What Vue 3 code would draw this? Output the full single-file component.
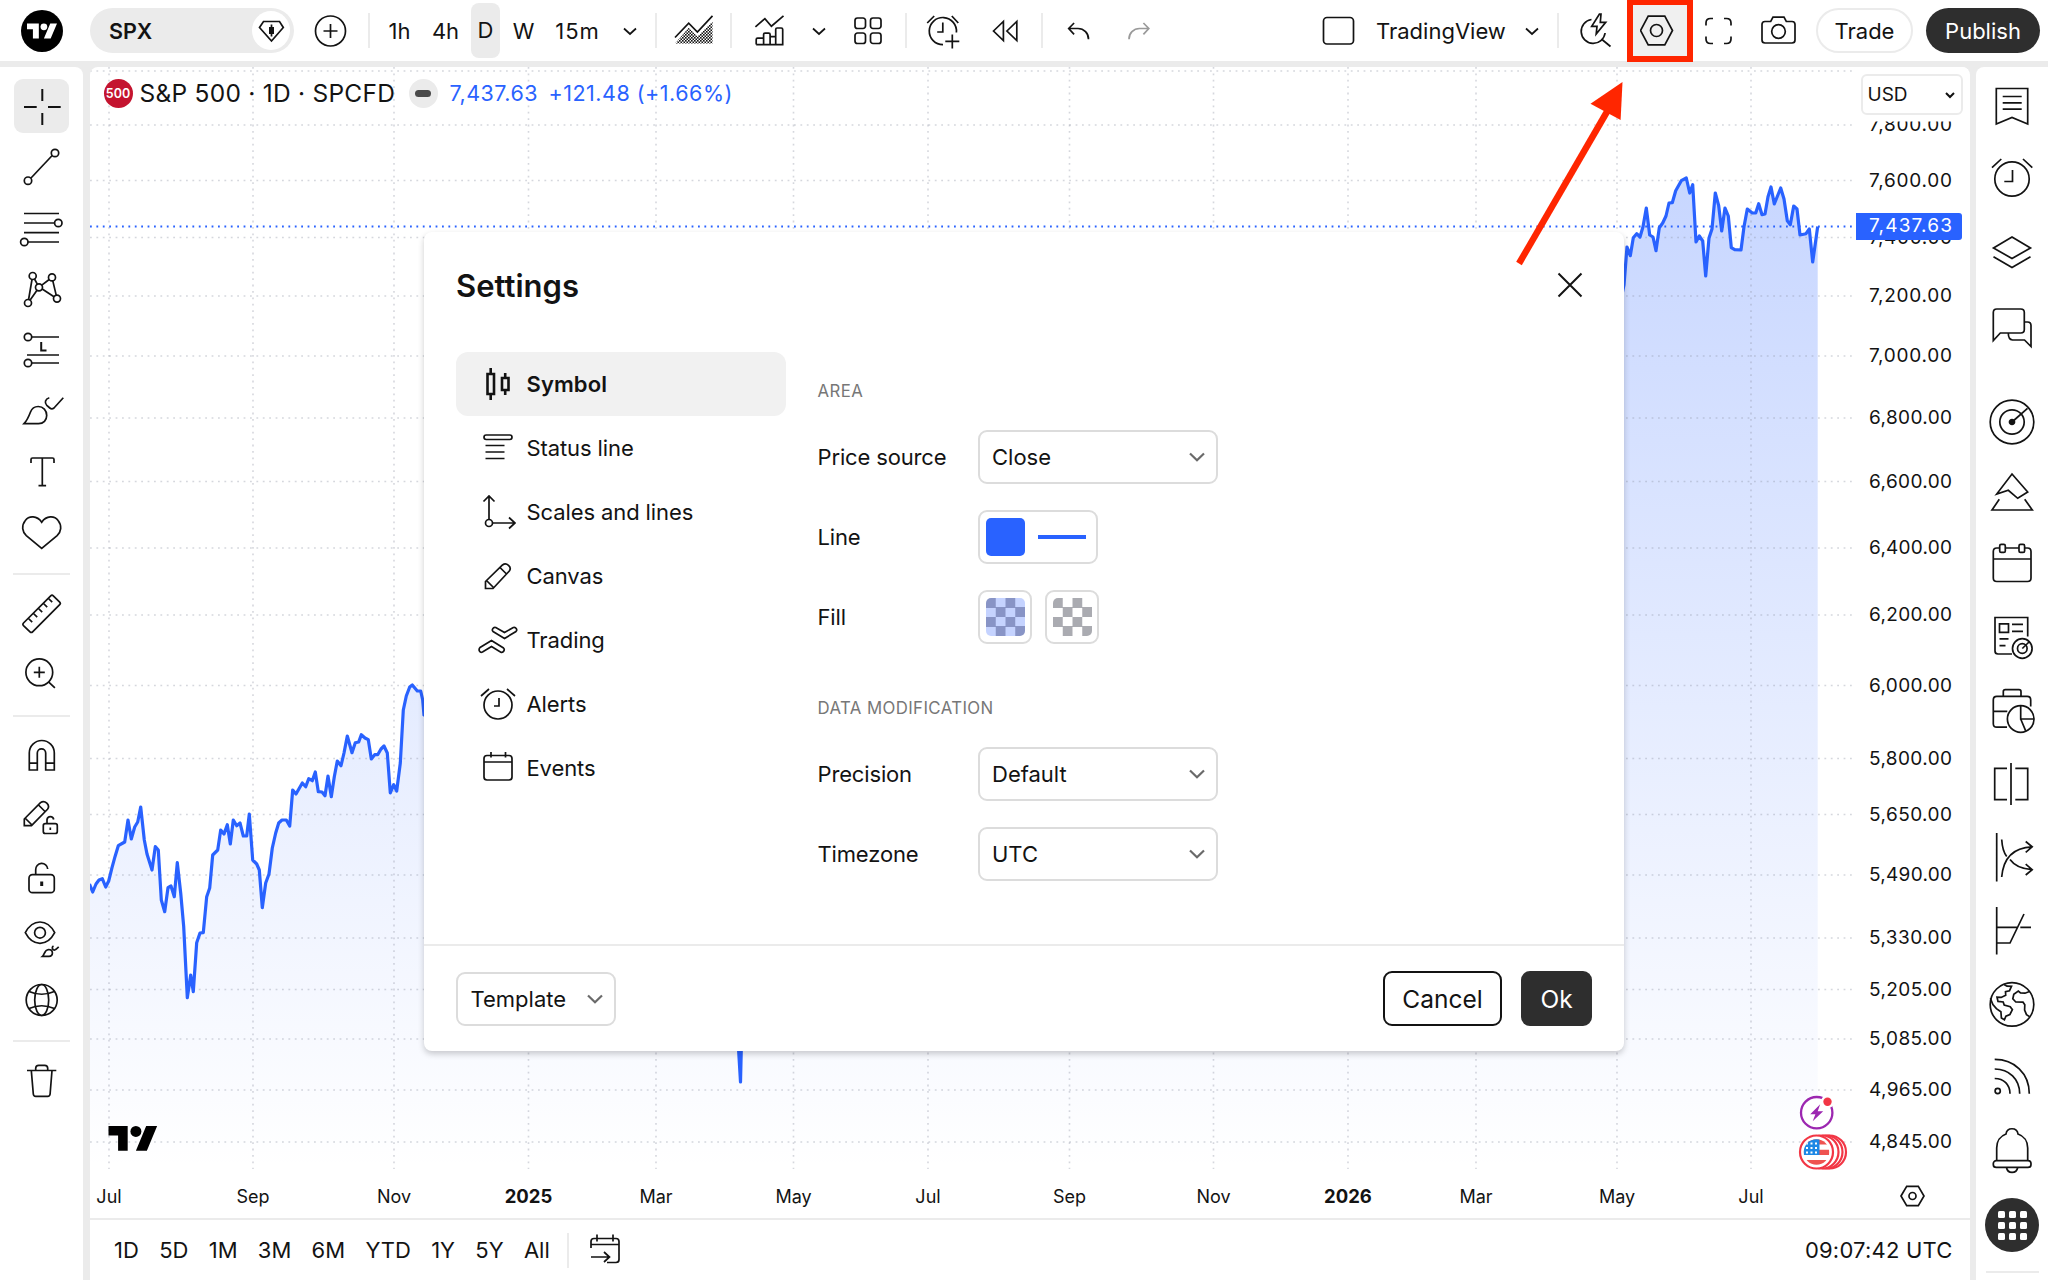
<script setup>

import { ref, computed } from 'vue';

// top bar
const intervals = ref(['1h', '4h', 'D', 'W', '15m']);
const activeInterval = ref('D');

// icons of the top bar, all drawn around 0,0
const topIcons = {
  plus: '<circle r="15"/><path d="M-7 0H7M0-7V7"/>',
  area: '<path d="M-19 6.5L-5.3-7.8 3.4 1 18.5-15.2"/><path d="M-19 12.5L-5.3-3.2 3.4 5.5 18.5-9.5V12.5z" fill="url(#hatch)" stroke="none"/>',
  indicators: '<path d="M-13.6-4.2l9.5-8.2 6.5 7.6L14.5-15.2M-12.8 13.6V8.6q0-1.4 1.4-1.4h6v6.4h-7.4M-5.4 13.6V3.6q0-1.4 1.4-1.4h3.7q1.4 0 1.4 1.4v10h-6.5M1.1 5.7h5.6v7.9H1.1M6.7 13.6V-1.6q0-1.4 1.4-1.4h4.2q1.4 0 1.4 1.4v15.2h-7"/>',
  layout: '<rect x="-13" y="-13" width="10.5" height="10.5" rx="2.5"/><rect x="2.5" y="-13" width="10.5" height="10.5" rx="2.5"/><rect x="-13" y="2" width="10.5" height="10.5" rx="2.5"/><rect x="2.5" y="2" width="10.5" height="10.5" rx="2.5"/>',
  alarm: '<path d="M0 13.7A13.6 13.6 0 1 1 13.4 1.5M-.2-8.5V1h-5.6M-15.8-8l7-7M8.8-15l6.5 7M2.3 10.3h14M9.3 3.5v14"/>',
  replay: '<path d="M-11.5 0L-1.6-9.5V9.5zM1.9 0L11.8-9.5V9.5z"/>',
  undo: '<path d="M-4.4-8l-5.4 5.5 5.4 5.8M-9.8-2.5H-.5A10.5 10.5 0 0 1 10 8.3"/>',
  redo: '<path d="M4.4-8l5.4 5.5-5.4 5.8M9.8-2.5H.5A10.5 10.5 0 0 0-10 8.3"/>',
  quick: '<path d="M-5-11.5A12 12 0 1 0 8.6 2M5.5 8.5L14 15.5M3-17l-7.8 12.3h5.3L-.3 3 9.2-8.7H3.8L4.5-17z"/>',
  settings: '<path d="M-16 0l7.7-14.3H8.3L16 0 8.3 14.3H-8.3z"/><circle r="6"/>',
  full: '<path d="M-12.5-5.5v-2.5q0-4.5 4.5-4.5h2.500M5.500-12.500h2.500q4.500 0 4.500 4.500v2.500M12.500 5.500v2.500q0 4.500-4.500 4.500h-2.500M-5.500 12.500h-2.500q-4.500 0-4.500-4.500v-2.500"/>',
  camera: '<path d="M-13.500-9.500h5.700l2.300-4.300h11l2.300 4.300h5.700q3 0 3 3V9q0 3-3 3h-27q-3 0-3-3V-6.500q0-3 3-3z"/><circle cy=".5" r="6.800"/>',
};

// drawing tools, grouped the way they are separated in the left bar
const toolGroups = [
  [
    { name: 'cross', svg: '<path stroke-width="2" d="M28.300 10v12M28.300 34v12M10 28h12.700M34 28h12.700"/>' },
    { name: 'trend', svg: '<circle cx="14" cy="40.700" r="3.700"/><circle cx="41" cy="13" r="3.700"/><path d="M17 38L38.200 15.500"/>' },
    { name: 'fib', svg: '<path d="M10 12.500h35M10 22h30.600M10 31.700h35M14 41h31"/><circle cx="44.300" cy="22" r="3.700"/><circle cx="10.300" cy="41" r="3.700"/>' },
    { name: 'pattern', svg: '<circle cx="14" cy="41" r="3.500"/><circle cx="18.700" cy="14" r="3.500"/><circle cx="25" cy="25.300" r="3.500"/><circle cx="38" cy="15.400" r="3.500"/><circle cx="43" cy="36.600" r="3.500"/><path d="M14.600 37.500L18 17.500M20.500 17l2.800 5.200M27.800 23.200l7.400-5.700M38.800 18.900l3.400 14.200M28.200 27l11.800 7.800M23 28.200L16 38.200"/>' },
    { name: 'forecast', svg: '<circle cx="14" cy="14" r="3.700"/><path d="M17.700 14H45M13 32h32M17.700 40H45"/><circle cx="14" cy="40" r="3.700"/><path stroke-width="2" d="M27.200 19v8.600h5.300"/>' },
    { name: 'brush', svg: '<path d="M10 39.700h14.500c5 0 8.200-3.500 8.200-8.300 0-5-3.500-8.900-8.500-8.900-4 0-6.500 2.300-7.700 5.500-1.500 4-3 8-6.500 11.700zM35.300 13.700c-4 1.200-5.200 5-2.500 7.600l3 2.700c1.500 1.300 2.700 1.200 4.200 0L49.300 13.700"/>' },
    { name: 'text', svg: '<path d="M17 18v-3.500q0-1.500 1.500-1.500h20q1.500 0 1.500 1.500V18M28.300 13v27.600M24.500 40.600h7.600"/>' },
    { name: 'heart', svg: '<path d="M27.700 16.200C23 9.500 15 9.500 11.300 14.500c-4.200 5.300-3 11.500 1 15.200L27.700 42.500 43.100 29.700c4-3.700 5.200-9.900 1-15.200C40.400 9.500 32.400 9.500 27.700 16.200z"/>' },
  ],
  [
    { name: 'ruler', svg: '<path d="M9.500 36L36.700 8.800q1.300-1.300 2.600 0l6.400 6.300q1.300 1.300 0 2.600L18.600 44.800q-1.300 1.300-2.600 0L9.500 38.600q-1.300-1.300 0-2.600zM14.500 31.500l3.700 3.700M19.500 26.500l3.700 3.700M24.500 21.500l3.700 3.700M29.500 16.500l3.700 3.700M34.500 11.500l3.700 3.700"/>' },
    { name: 'zoom', svg: '<circle cx="25.300" cy="24.300" r="13.400"/><path d="M34.500 33.800l6.400 6M19.800 24.300h11M25.300 18.800v11"/>' },
  ],
  [
    { name: 'magnet', svg: '<path d="M15.300 41V24a12.500 12.500 0 0 1 25 0v17h-8.600V24a4.200 4.200 0 0 0-8.400 0v17zM15.300 34.200h8M31.700 34.200h8.600"/>' },
    { name: 'pencil-lock', svg: '<path d="M10.300 35.700V29L26.500 12.700q3.200-2.600 6.300.5t.7 6.100L17.500 35.700zM11.500 28.500l6.500 6.500M24.500 15l7 7"/><rect x="29.300" y="33.700" width="14" height="9.800" rx="2"/><path d="M33 33.500v-4a3.400 3.400 0 0 1 6.700 0M36.300 37.500v2.500"/>' },
    { name: 'lock', svg: '<rect x="15" y="23.700" width="25.300" height="18" rx="3.500"/><path d="M21.700 23.500v-4.700a6 6 0 0 1 12-.8"/><path stroke-width="3" d="M27.700 30.500v4.500"/>' },
    { name: 'eye', svg: '<path d="M11.300 20.700C15 13.700 20.500 10 26 10S37 13.700 40.700 20.700C37 27.700 31.500 31.400 26 31.400S15 27.700 11.300 20.700z"/><circle cx="26" cy="20.700" r="5.400"/><path d="M28.500 44.300c1.800-1.500 2-6.500 6-6.800 2.500 0 3.900 1.500 3.900 3.500s-1.500 3.300-3.400 3.300zM39.500 34c-1.500.8-1.600 2.600-.3 3.600s2 .5 5.500-2.800"/>' },
    { name: 'globe', svg: '<circle cx="27.700" cy="27" r="15.500"/><ellipse cx="27.700" cy="27" rx="7" ry="15.500"/><path d="M15 18.500q12.700 5.500 25.400 0M15 35.500q12.700-5.500 25.400 0"/>' },
  ],
  [
    { name: 'trash', svg: '<path d="M13 16.500h29.300M17.300 16.500l2 23.500q.2 2.300 2.400 2.300h12q2.200 0 2.400-2.300L38 16.500M21.700 16.500v-2.200q0-3 3-3h6q3 0 3 3v2.200"/>' },
  ],
];

// widgets of the right bar, drawn around 0,0
const widgetGroups = [
  [
    { name: 'watchlist', svg: '<path d="M-15.700-17.500h31.400V18L0 11.500-15.700 18zM-9.300-9.500h19M-9.300-3.200h19M-9.300 3.200h19"/>' },
    { name: 'alerts', svg: '<circle cy="-1" r="17.200"/><path d="M.5-10V1.500h-8.200M-20-12.400l9.300-8.600M11-21l9.300 8.600"/>' },
    { name: 'layers', svg: '<path d="M0-17L18.500-6 0 4.500-18.500-6zM-18.500 2.700L0 13.600 18.500 2.700"/>' },
    { name: 'chat', svg: '<path d="M-18.700 12.500V-15.500q0-3.500 3.500-3.500h24q3.500 0 3.500 3.500V1.500q0 3.500-3.500 3.500h-20.500zM12.300-6h3.200q3.500 0 3.500 3.500v21L12.500 12H.5Q-3.700 11.500-3.700 5"/>' },
  ],
  [
    { name: 'screener', svg: '<circle r="21.800"/><circle r="12.200"/><path d="M0 0l15.500-13.700"/><circle r="2.500" fill="currentColor"/>' },
    { name: 'pine', svg: '<path d="M0-21L15.700-3 5.700 3.300-3.700-4.700-15.300-1zM-12.700 4.300L-20 15h40.300L12.700 4.300"/>' },
    { name: 'calendar', svg: '<path d="M-12.300-20h-2.900q-3.500 0-3.500 3.500V10q0 3.500 3.500 3.500h30.700q3.500 0 3.500-3.500v-26.500q0-3.500-3.500-3.500h-2.800M-6.700-20H7M-18.700-9H19"/><rect x="-12.300" y="-23.600" width="5.600" height="8" rx="1.500"/><rect x="7" y="-23.600" width="5.600" height="8" rx="1.500"/>' },
    { name: 'news', svg: '<path d="M15.700-4.500v-19H-17V10q0 3 3 3H0M-12.500-17.200h9v8.600h-9zM0-16.700h11M0-9.700h11M-12.500-2.200h9M-12.500 4.600h6"/><circle cx="10.300" cy="7.500" r="9.800"/><circle cx="10.300" cy="7.500" r="4.800"/><path d="M10.300 7.500L17 1"/>' },
    { name: 'portfolio', svg: '<path d="M-8.700-17.600v-4.700q0-2 2-2H7q2 0 2 2v4.700M18.700-7.500v-6.600q0-3.500-3.500-3.500h-30.400q-3.500 0-3.500 3.500V9.700q0 3.500 3.500 3.500H-5M-18.700-2.600h14"/><circle cx="8.700" cy="5" r="13.300"/><path d="M8.700-8.300V5H22M8.700 5l5 11.800"/>' },
    { name: 'compare', svg: '<path d="M-1-24v42M-5-18.700h-12.300v31.300H-5M3.300-18.700h12.400v31.300H3.300"/>' },
    { name: 'options', svg: '<path d="M-15.300-27v48.500M-10.300-20.500c.5 8 2.300 13.500 5 17M-2-.5c5 7 11.500 9.500 22 10.200M-10.300 17C-8.500-4 3-12.500 20-13.200M13.700-18.500l6.500 5.300-6.500 5.500M13.700 4.200l6.500 5.500-6.500 5.300"/>' },
    { name: 'payoff', svg: '<path d="M-15.300-26v47.600M-15.300-5.700H5M8.300-5.700H19M-15.300 10H-2L12-19"/>' },
    { name: 'world', svg: '<circle cy="-1.600" r="21.800"/><path d="M-8-21.500l3 1.700 4.500.2-2 4.300-4 1 .2 3.500-4.500 2.200-4.200-.3 1 4.300 5.200.6 1 3 6 1.700 2.200 3-2.500 4.800-4 1.700-1.500 3.600-3-1.700-.5-6.300-4.500-3.200-3.500-4-2.500-6.300M17.500-14.500l-4.500 1.700-4.500-.2-2.200-2-4.500 3.200-1 4.500 3 3.300 7.200.2 1.800 2.600-.2 5.200 1.900 4.600 3 2"/>' },
    { name: 'feed', svg: '<circle cx="-14.300" cy="12" r="2.600"/><path d="M-17.300-.5C-8.300-.5-2 5.500-2 14.800M-17.300-10C-3-10 7.700 0 7.700 14.800M-17.300-19.600C2-19.600 17.300-6 17.300 14.800"/>' },
    { name: 'bell', svg: '<rect x="-18.700" y="8.600" width="37.700" height="6.800" rx="3"/><path d="M-15.300 8.600V-4c0-6.500 3.500-12 9.300-14 1-7 11-7 12 0 6 2 9.700 7.500 9.700 14V8.600M-5.500 15.500c1 6.500 10 6.500 11.200 0"/>' },
  ],
];

// grid and labels of the chart
const priceTicks = [
  { y: 125, text: '7,800.00' },
  { y: 180.5, text: '7,600.00' },
  { y: 237.5, text: '7,400.00' },
  { y: 296, text: '7,200.00' },
  { y: 356, text: '7,000.00' },
  { y: 418, text: '6,800.00' },
  { y: 481.5, text: '6,600.00' },
  { y: 548, text: '6,400.00' },
  { y: 615, text: '6,200.00' },
  { y: 685.5, text: '6,000.00' },
  { y: 758.5, text: '5,800.00' },
  { y: 814.5, text: '5,650.00' },
  { y: 875, text: '5,490.00' },
  { y: 938, text: '5,330.00' },
  { y: 989.5, text: '5,205.00' },
  { y: 1039, text: '5,085.00' },
  { y: 1090, text: '4,965.00' },
  { y: 1142, text: '4,845.00' },
];

const timeTicks = [
  { x: 109, text: 'Jul' },
  { x: 253, text: 'Sep' },
  { x: 394, text: 'Nov' },
  { x: 528.5, text: '2025', bold: true },
  { x: 656, text: 'Mar' },
  { x: 793.5, text: 'May' },
  { x: 928, text: 'Jul' },
  { x: 1069.5, text: 'Sep' },
  { x: 1213.5, text: 'Nov' },
  { x: 1348, text: '2026', bold: true },
  { x: 1476, text: 'Mar' },
  { x: 1617, text: 'May' },
  { x: 1751, text: 'Jul' },
];

// price series, x and y pairs
const linePoints = ref([
  '89.5,884 92.7,892 96,884 99,880 102.3,878.7 105.7,887 108.7,881 112,867.7 115,856.7 118.3,845.7',
  '124.7,842 128,820 131.3,839 134.7,827 137.7,822 140.7,807 144.3,840 147,854 152,870 155.3,846.7',
  '158.3,850 161.3,900 164.7,911.7 168,887.7 171,886 174.3,896.7 177.3,862.7 180.7,893 183.7,926.7',
  '187.3,997.7 190.7,975 193.3,991.7 196.7,942.7 200,933 203.3,932.7 206.7,896.7 209.7,888 212.7,855',
  '217.7,850 220.7,830 224,834 227.3,824.7 230.3,844 233.3,820 236.7,825.7 240,823 243.3,836 246.7,836',
  '249.3,814 252.7,860 256.7,864 259.3,870 262.3,907.7 265.7,883 269,874 272.3,848 275.7,833 278.7,823',
  '282,820 286.3,820 289.7,826 292.7,790 296,794 302.3,783 305.7,786.7 308.7,778.7 312.3,780.7 315.3,772',
  '318.3,791.7 322,792 325,795.7 328,776 331.3,796.7 334.3,776.7 337.3,761 341,765.7 344,753 347.3,736',
  '352,752.7 355.3,742.7 358.7,742 361.3,734.7 365,738 368.3,739.7 371.3,759 374.7,754.7 377.7,754.7',
  '381,749 384,746 387.3,753 390.3,793 393.7,784.7 396.7,791 400.3,763 403.3,710 406.3,696 409.7,687',
  '412.3,685 417.3,691 420.7,691 422.7,700 424,715 730,900 738,1040 740.5,1082 741.5,1040 760,850',
  '1600,400 1624,285 1627,247 1630.3,255.7 1633.3,237.7 1636.7,233.7 1640,237 1643,226.7 1646.3,208',
  '1649.7,235 1653,237 1656,250.7 1659.3,227.7 1662.7,223 1666,216 1669,203 1672.3,202.7 1675.7,190.7',
  '1681.3,180.7 1686.3,178 1689.7,193 1692.7,184.7 1696,242 1699.3,236 1702.7,241 1705.7,276 1709,238',
  '1712,229 1715.3,193 1718.7,205.7 1721.7,231 1725,208 1728.3,216 1731.3,247.7 1734.7,249.7 1741,250',
  '1744,226.7 1747.3,209 1752.3,213 1755.7,213 1758.7,203.7 1762,214.7 1765,214 1768,196.7 1771,187',
  '1774.3,204 1780.7,188 1784,199 1787.3,220.7 1790.3,224.7 1793.7,206 1797,209 1800,235 1806,233.7',
  '1809.3,229 1812.7,262 1817.7,226.5',
].join(' '));

// same line closed at the bottom for the fill
const areaPoints = computed(() => linePoints.value + ' 1817.7,1169 89.5,1169');

const ranges = ['1D', '5D', '1M', '3M', '6M', 'YTD', '1Y', '5Y', 'All'];

// settings dialog
const showSettings = ref(true);
const activeTab = ref('Symbol');

const tabs = [
  { name: 'Symbol', svg: '<path stroke-width="2.6" d="M-10.500-10h6.500v20h-6.500zM-7.300-16v6M-7.300 10v6M4-6h6.500V6H4zM7.200-11v5M7.200 6v5"/>' },
  { name: 'Status line', svg: '<rect x="-14" y="-13" width="28" height="4.500" rx="2.200"/><path d="M-12.500-2.500h19M-12.500 4h19M-12.500 10.500h19"/>' },
  { name: 'Scales and lines', svg: '<path d="M-9 7.500V-15.500M-14.500-10.500l5.500-5.500 5.500 5.500M-5.500 11H16.500M11 5.500l6 5.500-6 5.500"/><circle cx="-9" cy="11" r="3.500"/>' },
  { name: 'Canvas', svg: '<path d="M-12.500 12.500V5.500L4.500-11q3-2.300 6 .3t.8 5.700L-5 12.500zM-11.500 4.500l7 7M2-8.500l7 7"/>' },
  { name: 'Trading', svg: '<path d="M-18 7.500L-6.500.5 5.500 8q1.300 1.200.3 3t-3 1.200L-6.500 6.500-15.500 12q-2 .8-3-.9T-18 7.500zM-5-8.500L6.500-1.500 18-8.500q1.300-1.200.3-2.900t-3-1.100L6.500-7.500-2.200-12.500q-2-.6-3 1.100T-5-8.500z"/>' },
  { name: 'Alerts', svg: '<circle cy="1" r="14"/><path d="M1-6v8h-5M-17-8l8-7M9-15l8 7"/>' },
  { name: 'Events', svg: '<rect x="-14" y="-12.500" width="28" height="24.500" rx="3"/><path d="M-14-6H14M-7-16v5.500M7.500-16v5.500"/>' },
];

const closeSettings = () => {
  showSettings.value = false;
};

</script>

<template>

  <div class="app">

    <!-- pattern for the area chart type icon -->
    <svg class="defs" width="0" height="0">
      <defs>
        <pattern id="hatch" width="3" height="3" patternUnits="userSpaceOnUse">
          <rect width="1.6" height="1.6" fill="#111" />
          <rect x="1.5" y="1.5" width="1.5" height="1.5" fill="#111" />
        </pattern>
      </defs>
    </svg>

    <header class="topbar">
      <div class="logo">
        <svg width="30" height="16" viewBox="0 4 35.5 18" fill="#fff">
          <path d="M14 22H7V11H0V4h14v18zM28 22h-8l7.5-18h8L28 22z" />
          <circle cx="20" cy="8" r="4" />
        </svg>
      </div>

      <div class="search">
        <span class="ticker">SPX</span>
        <span class="badge">
          <svg class="icon" width="32" height="32" viewBox="-16 -16 32 32">
            <path d="M-7.500-9.500h16L12.300-3.500.5 10-11.500-3.500z" />
            <rect x="-2" y="-4" width="5" height="7" fill="currentColor" stroke="none" />
            <path d="M.5-6.500V5.500" />
          </svg>
        </span>
      </div>

      <button class="tool w74"><svg class="icon" viewBox="-19.500 -20 40 40" v-html="topIcons.plus"></svg></button>
      <i class="sep"></i>

      <div class="intervals">
        <span v-for="item in intervals" :key="item" :class="['interval', 'i' + item, { active: item === activeInterval }]"
          @click="activeInterval = item">{{ item }}</span>
        <svg class="icon chev" viewBox="-8 -5 16 10">
          <path d="M-6-2.500L0 3l6-5.500" />
        </svg>
      </div>
      <i class="sep"></i>

      <button class="tool w73"><svg class="icon" viewBox="-20 -20 40 40" v-html="topIcons.area"></svg></button>
      <i class="sep"></i>
      <button class="tool w74"><svg class="icon" viewBox="-20 -20 40 40" v-html="topIcons.indicators"></svg></button>
      <button class="tool w25"><svg class="icon chev" viewBox="-8 -5 16 10">
          <path d="M-6-2.500L0 3l6-5.500" />
        </svg></button>
      <button class="tool w74"><svg class="icon" viewBox="-20 -20 40 40" v-html="topIcons.layout"></svg></button>
      <i class="sep"></i>
      <button class="tool w72"><svg class="icon" viewBox="-20 -20 40 40" v-html="topIcons.alarm"></svg></button>
      <button class="tool w62"><svg class="icon" viewBox="-15 -20 40 40" v-html="topIcons.replay"></svg></button>
      <i class="sep"></i>
      <button class="tool w72"><svg class="icon" viewBox="-19.500 -20 40 40" v-html="topIcons.undo"></svg></button>
      <button class="tool w50 dim"><svg class="icon" viewBox="-19 -20 40 40" v-html="topIcons.redo"></svg></button>

      <div class="right">
        <svg class="icon" viewBox="-20.500 -20 40 40">
          <rect x="-15" y="-13.500" width="30" height="26.500" rx="3.500" />
        </svg>
        <span class="layout-name">TradingView</span>
        <svg class="icon chev" viewBox="-8 -5 16 10">
          <path d="M-6-2.500L0 3l6-5.500" />
        </svg>
        <i class="sep"></i>
        <svg class="icon quick" viewBox="-20.500 -20 40 40" v-html="topIcons.quick"></svg>
        <button class="marked" @click="showSettings = true">
          <svg class="icon" viewBox="-16.500 -19.500 40 40" v-html="topIcons.settings"></svg>
        </button>
        <svg class="icon full" viewBox="-20.500 -20 40 40" v-html="topIcons.full"></svg>
        <svg class="icon camera" viewBox="-20.500 -20 40 40" v-html="topIcons.camera"></svg>
        <button class="trade">Trade</button>
        <button class="publish">Publish</button>
      </div>
    </header>

    <div class="main">

      <!-- drawing tools -->
      <aside class="leftbar">
        <div v-for="(group, index) in toolGroups" :key="index" class="group">
          <div v-for="tool in group" :key="tool.name" class="slot">
            <div :class="['tile', { active: tool.name === 'cross' }]">
              <svg class="icon" viewBox="0 0 56 54" v-html="tool.svg"></svg>
            </div>
          </div>
        </div>
      </aside>

      <section class="center">

        <svg class="chart" width="1880" height="1151" viewBox="90 67 1880 1151">
          <defs>
            <linearGradient id="fill" gradientUnits="userSpaceOnUse" x1="0" y1="178" x2="0" y2="1169">
              <stop offset="0" stop-color="#2962ff" stop-opacity=".26" />
              <stop offset="1" stop-color="#2962ff" stop-opacity="0" />
            </linearGradient>
          </defs>

          <polygon :points="areaPoints" fill="url(#fill)" />

          <g class="grid">
            <path v-for="t in timeTicks" :key="t.x" :d="`M${t.x} 67V1169`" />
            <path d="M90 71H1852" />
            <path v-for="p in priceTicks" :key="p.y" :d="`M90 ${p.y}H1852`" />
          </g>

          <path class="last" d="M90 226.500H1852" />
          <polyline class="line" :points="linePoints" />

          <!-- price scale -->
          <g class="prices">
            <text v-for="p in priceTicks" :key="p.y" x="1869" :y="p.y + 6" textLength="83">{{ p.text }}</text>
          </g>
          <rect x="1854" y="67" width="114" height="54.5" fill="#fff" />
          <path d="M1856 213h103q3 0 3 3v21q0 3-3 3h-103z" fill="#2962ff" />
          <text class="tag" x="1869" y="232" textLength="83">7,437.63</text>

          <!-- time scale -->
          <g class="times">
            <text v-for="t in timeTicks" :key="t.x" :x="t.x" y="1203" :class="{ bold: t.bold }">{{ t.text }}</text>
          </g>
          <g class="icon" transform="translate(1912.5 1196)">
            <path d="M-11.500 0l5.700-9.700H5.800L11.500 0 5.800 9.700H-5.800z" />
            <circle r="3.500" />
          </g>

          <!-- watermark -->
          <g transform="translate(108.500 1120.500) scale(1.370)">
            <path d="M14 22H7V11H0V4h14v18zM28 22h-8l7.500-18h8L28 22z" />
            <circle cx="20" cy="8" r="4" />
          </g>

          <!-- events on the last bar -->
          <g transform="translate(1816.700 1112.700)">
            <circle r="15.7" fill="#fff" stroke="#9c27b0" stroke-width="2.3" />
            <path d="M3.500-8.500L-6.500 1.500h5.200L-4 8.500 6.500-1.500H1z" fill="#9c27b0" />
            <circle cx="10.8" cy="-11" r="6.5" fill="#fff" />
            <circle cx="10.8" cy="-11" r="4.2" fill="#f23645" />
          </g>
          <g transform="translate(1816.500 1152)" fill="#fff" stroke="#f23645" stroke-width="2.2">
            <circle cx="13" r="16.5" />
            <circle cx="9.5" r="16.5" />
            <circle cx="5.5" r="16.5" />
            <circle r="16.5" />
            <g stroke="none">
              <clipPath id="round">
                <circle r="12.8" />
              </clipPath>
              <g clip-path="url(#round)">
                <rect x="-13" y="-13" width="26" height="26" fill="#fff" />
                <path d="M-13-13h26v5.500h-26zM-13-2.300h26v5.200h-26zM-13 8h26v6h-26z" fill="#ef5350" />
                <rect x="-13" y="-13" width="16" height="16" fill="#1e88e5" />
                <path d="M-10.500-8.500H2M-10.500-4H2M-10.500.5H2" stroke="#fff" stroke-width="1.8" stroke-dasharray="2 2.5" />
              </g>
            </g>
          </g>
        </svg>

        <!-- symbol legend over the chart -->
        <div class="legend">
          <span class="sp">500</span>
          <span class="title">S&amp;P 500 · 1D · SPCFD</span>
          <span class="dash"><i></i></span>
          <span class="value">7,437.63</span>
          <span class="value change">+121.48 (+1.66%)</span>
        </div>

        <div class="currency">
          <span>USD</span>
          <svg width="12" height="10" viewBox="-6 -5 12 10" fill="none" stroke="#111" stroke-width="2">
            <path d="M-4-2L0 2l4-4" />
          </svg>
        </div>

        <footer class="bottombar">
          <span v-for="range in ranges" :key="range">{{ range }}</span>
          <i class="sep"></i>
          <svg class="icon goto" viewBox="-16 -16 32 32">
            <path d="M-14-2V-8.500q0-3 3-3h22q3 0 3 3V9.500q0 3-3 3H2M-14-5.500H14M-8-15.500v7M8-15.500v7M-14 7H4M-1 2l5.500 5-5.500 5" />
          </svg>
          <span class="clock">09:07:42 UTC</span>
        </footer>
      </section>

      <!-- widgets -->
      <aside class="rightbar">
        <div v-for="(group, index) in widgetGroups" :key="index" class="widgets">
          <div v-for="item in group" :key="item.name" class="widget">
            <svg class="icon" width="56" height="60" viewBox="-28 -30 56 60" v-html="item.svg"></svg>
          </div>
        </div>
        <div class="widget">
          <div class="apps"><i v-for="n in 9" :key="n"></i></div>
        </div>
        <hr>
      </aside>
    </div>

    <!-- settings dialog -->
    <div v-if="showSettings" class="dialog">
      <div class="dialog-head">
        <h2>Settings</h2>
        <svg class="icon close" width="26" height="26" viewBox="-13 -13 26 26" @click="closeSettings()">
          <path d="M-11.500-11.500l23 23M11.500-11.500l-23 23" />
        </svg>
      </div>

      <div class="dialog-body">
        <nav>
          <div v-for="tab in tabs" :key="tab.name" :class="['tab', { active: tab.name === activeTab }]"
            @click="activeTab = tab.name">
            <svg class="icon" width="40" height="40" viewBox="-20 -20 40 40" v-html="tab.svg"></svg>
            <span>{{ tab.name }}</span>
          </div>
        </nav>

        <div class="form">
          <h3>AREA</h3>
          <div class="row">
            <label>Price source</label>
            <div class="select">Close<svg class="arrow" viewBox="-9 -6 18 12">
                <path d="M-7-3.500L0 3.200l7-6.700" />
              </svg></div>
          </div>
          <div class="row">
            <label>Line</label>
            <div class="line-box"><i class="swatch"></i><i class="stroke"></i></div>
          </div>
          <div class="row">
            <label>Fill</label>
            <div class="color-box"><i class="swatch checker blue"></i></div>
            <div class="color-box"><i class="swatch checker"></i></div>
          </div>

          <h3 class="second">DATA MODIFICATION</h3>
          <div class="row">
            <label>Precision</label>
            <div class="select">Default<svg class="arrow" viewBox="-9 -6 18 12">
                <path d="M-7-3.500L0 3.200l7-6.700" />
              </svg></div>
          </div>
          <div class="row">
            <label>Timezone</label>
            <div class="select">UTC<svg class="arrow" viewBox="-9 -6 18 12">
                <path d="M-7-3.500L0 3.200l7-6.700" />
              </svg></div>
          </div>
        </div>
      </div>

      <div class="dialog-foot">
        <div class="template">Template<svg class="arrow" viewBox="-9 -6 18 12">
            <path d="M-7-3.500L0 3.200l7-6.700" />
          </svg></div>
        <button class="cancel" @click="closeSettings()">Cancel</button>
        <button class="ok" @click="closeSettings()">Ok</button>
      </div>
    </div>

    <!-- arrow pointing at the settings button -->
    <svg class="pointer" width="120" height="200" viewBox="1510 75 120 200">
      <path d="M1519 263.500L1608 110" stroke="#ff2600" stroke-width="6.5" />
      <path d="M1622.500 82l-32 21.700L1620.600 120z" fill="#ff2600" />
    </svg>

  </div>

</template>

<style>
body {
  overflow: hidden;
}
</style>

<style scoped>
.app {
  position: relative;
  width: 2048px;
  height: 1280px;
  overflow: hidden;
  background: #ebebeb;
  color: #131313;
  font-family: Inter, "Liberation Sans", sans-serif;
  font-size: 22px;
}

.app * {
  box-sizing: border-box;
}

.defs,
.pointer {
  position: absolute;
}

.pointer {
  left: 1510px;
  top: 75px;
}

button {
  padding: 0;
  border: none;
  background: none;
  color: inherit;
  font: inherit;
  cursor: pointer;
}

.icon {
  flex: none;
  fill: none;
  stroke: currentColor;
  stroke-width: 1.7;
}

/* top bar */
.topbar {
  display: flex;
  align-items: center;
  height: 61px;
  background: #fff;
}

.topbar .icon {
  width: 40px;
  height: 40px;
}

.topbar .icon.chev {
  width: 16px;
  height: 10px;
}

.logo {
  display: flex;
  flex: none;
  align-items: center;
  justify-content: center;
  width: 42px;
  height: 42px;
  margin: 0 27px 0 21px;
  border-radius: 50%;
  background: #000;
}

.search {
  display: flex;
  flex: none;
  align-items: center;
  justify-content: space-between;
  width: 204px;
  height: 45px;
  padding: 0 4px 0 19px;
  border-radius: 23px;
  background: #ebebeb;
}

.ticker {
  font-weight: 600;
  font-size: 21.5px;
}

.badge {
  display: flex;
  align-items: center;
  justify-content: center;
  width: 38px;
  height: 39px;
  border-radius: 50%;
  background: #fff;
}

.badge .icon {
  width: 32px;
  height: 32px;
}

.sep {
  flex: none;
  width: 2px;
  height: 35px;
  background: #ebebeb;
}

.tool {
  display: flex;
  flex: none;
  align-items: center;
  justify-content: center;
  height: 61px;
}

.w25 {
  width: 25px;
}

.w50 {
  width: 50px;
}

.w62 {
  width: 62px;
}

.w72 {
  width: 72px;
}

.w73 {
  width: 73px;
}

.w74 {
  width: 74px;
}

.dim {
  color: #9a9a9a;
}

.intervals {
  display: flex;
  flex: none;
  align-items: center;
  width: 285px;
  padding-left: 6.5px;
}

.interval {
  flex: none;
  width: 46px;
  text-align: center;
}

.interval.iD {
  width: 29px;
  margin-left: 2.5px;
}

.interval.iW {
  width: 47px;
}

.interval.i15m {
  width: 61px;
  letter-spacing: .9px;
}

.interval.active {
  height: 55px;
  border-radius: 8px;
  background: #ebebeb;
  line-height: 55px;
}

.intervals .chev {
  margin-left: 14px;
}

.right {
  display: flex;
  align-items: center;
  height: 61px;
  margin-left: auto;
  padding-right: 8px;
}

.layout-name {
  width: 129px;
  margin: 0 19px 0 18px;
  white-space: nowrap;
}

.right .sep {
  margin: 0 17px 0 17px;
}

.marked {
  display: flex;
  align-items: center;
  justify-content: center;
  align-self: flex-start;
  width: 66px;
  height: 62px;
  margin: 0 5px 0 11px;
  border: 6.5px solid #ff2600;
  border-top-width: 5px;
  background: #f0f0f0;
}

.camera {
  margin-left: 20px;
}

.trade,
.publish {
  height: 45px;
  border-radius: 23px;
}

.trade {
  width: 97px;
  margin: 0 13px 0 18px;
  border: 2px solid #ebebeb;
}

.publish {
  width: 114px;
  background: #2e2e2e;
  color: #fff;
}

/* columns */
.main {
  display: flex;
  justify-content: space-between;
  height: 1213px;
  margin-top: 6px;
}

.leftbar {
  width: 83px;
  padding-top: 8.5px;
  border-top-right-radius: 8px;
  background: #fff;
}

.group + .group::before {
  content: '';
  display: block;
  width: 57px;
  height: 2px;
  margin: 9px 0 9px 13px;
  background: #ebebeb;
}

.slot {
  display: flex;
  align-items: center;
  height: 61px;
  padding-left: 14px;
}

.tile {
  width: 55px;
  height: 54px;
  border-radius: 9px;
}

.tile.active {
  background: #ebebeb;
}

.tile .icon {
  display: block;
  width: 56px;
  height: 54px;
}

.center {
  position: relative;
  display: flex;
  flex-direction: column;
  width: 1880px;
  overflow: hidden;
  border-radius: 8px 8px 0 0;
  background: #fff;
}

.chart {
  display: block;
  flex: none;
}

.grid path {
  fill: none;
  stroke: #8a8fa0;
  stroke-opacity: .36;
  stroke-width: 1.6;
  stroke-dasharray: 1.8 4.6;
}

.last {
  fill: none;
  stroke: #2962ff;
  stroke-width: 1.8;
  stroke-dasharray: 1.8 4.6;
}

.line {
  fill: none;
  stroke: #2962ff;
  stroke-width: 3.2;
  stroke-linejoin: round;
}

.prices text,
.tag {
  font-size: 19px;
}

.prices,
.times {
  fill: #131313;
}

.tag {
  fill: #fff;
}

.times text {
  font-size: 18px;
  text-anchor: middle;
}

.times .bold {
  font-weight: 700;
  font-size: 18.5px;
}

.legend {
  position: absolute;
  top: 10px;
  left: 14px;
  display: flex;
  align-items: center;
  height: 32px;
  white-space: nowrap;
}

.sp {
  width: 29px;
  height: 29px;
  border-radius: 50%;
  background: #c4142f;
  color: #fff;
  font-weight: 600;
  font-size: 12.5px;
  line-height: 29px;
  text-align: center;
}

.title {
  width: 256px;
  margin: 0 13px 0 7px;
  font-size: 24.5px;
  letter-spacing: .25px;
}

.dash {
  display: flex;
  align-items: center;
  justify-content: center;
  width: 29px;
  height: 29px;
  margin-right: 12px;
  border-radius: 50%;
  background: #ebebeb;
}

.dash i {
  width: 16px;
  height: 7px;
  border-radius: 3.5px;
  background: #4a4a4a;
}

.value {
  width: 89px;
  margin-right: 10px;
  color: #2962ff;
  font-size: 21.5px;
  letter-spacing: .5px;
}

.change {
  width: auto;
}

.currency {
  position: absolute;
  top: 7px;
  left: 1771px;
  display: flex;
  align-items: center;
  justify-content: space-between;
  width: 102px;
  height: 41px;
  padding: 0 5px 0 5px;
  border: 2px solid #ebebeb;
  border-radius: 6px;
  background: #fff;
  font-size: 19px;
}

.bottombar {
  display: flex;
  flex: none;
  align-items: center;
  gap: 20.3px;
  height: 62px;
  padding: 0 17px 0 24.5px;
  border-top: 2px solid #ebebeb;
  font-size: 22px;
}

.bottombar .sep {
  margin-left: -3px;
}

.goto {
  width: 32px;
  height: 32px;
}

.clock {
  margin-left: auto;
  letter-spacing: .2px;
}

/* right bar */
.rightbar {
  width: 72px;
  padding-top: 2px;
  border-top-left-radius: 8px;
  background: #fff;
}

.widget {
  display: flex;
  align-items: center;
  justify-content: center;
  height: 73px;
}

.widgets:first-child {
  margin-bottom: 20.5px;
}

.widgets:first-child .widget {
  height: 74px;
}

.apps {
  display: grid;
  grid-template-columns: repeat(3, 7px);
  gap: 4px;
  align-content: center;
  justify-content: center;
  width: 54px;
  height: 54px;
  border-radius: 50%;
  background: #2e2e2e;
}

.apps i {
  height: 7px;
  border-radius: 1.5px;
  background: #fff;
}

.rightbar hr {
  width: 53px;
  height: 2px;
  margin: 9px auto 0;
  border: none;
  background: #ebebeb;
}

/* settings dialog */
.dialog {
  position: absolute;
  top: 232px;
  left: 424px;
  display: flex;
  flex-direction: column;
  width: 1200px;
  height: 819px;
  border-radius: 8px;
  background: #fff;
  box-shadow: 0 3px 6px rgba(0, 0, 0, .2);
}

.dialog-head {
  display: flex;
  align-items: center;
  justify-content: space-between;
  height: 106px;
  padding: 0 41.5px 0 32px;
}

h2 {
  margin: 0;
  font-weight: 600;
  font-size: 31px;
}

.close {
  stroke-width: 2;
}

.dialog-body {
  display: flex;
  flex: 1;
  padding: 14px 32px 0;
}

nav {
  width: 329.5px;
  margin-right: 32px;
}

.tab {
  display: flex;
  align-items: center;
  height: 64px;
  padding-left: 22px;
  border-radius: 12px;
  cursor: pointer;
}

.tab span {
  margin-left: 8.5px;
  letter-spacing: -.1px;
}

.tab.active {
  background: #f1f1f1;
  font-weight: 600;
}

.tab.active span {
  letter-spacing: .1px;
}

h3 {
  margin: 28.5px 0 29px;
  color: #777;
  font-weight: 400;
  font-size: 16.8px;
  line-height: 20px;
  letter-spacing: .4px;
}

h3.second {
  margin-top: 54.5px;
}

.row {
  display: flex;
  align-items: center;
  height: 54px;
  margin-bottom: 26px;
}

.row label {
  width: 160.5px;
  letter-spacing: -.15px;
}

.select,
.template,
.line-box,
.color-box {
  display: flex;
  align-items: center;
  height: 54px;
  border: 2px solid #dcdcdc;
  border-radius: 9px;
}

.select {
  justify-content: space-between;
  width: 240px;
  padding: 0 10px 0 12px;
}

.arrow {
  width: 18px;
  height: 12px;
  fill: none;
  stroke: #6a6a6a;
  stroke-width: 2.2;
}

.line-box {
  width: 120px;
  padding-left: 6px;
}

.color-box {
  justify-content: center;
  width: 54px;
  margin-right: 13px;
}

.swatch {
  width: 39px;
  height: 38px;
  border-radius: 5px;
  background: #2962ff;
}

.stroke {
  width: 48px;
  height: 4px;
  margin-left: 13px;
  background: #2962ff;
}

.checker {
  background: repeating-conic-gradient(#fff 0 25%, #aaabb1 0 50%) 0 0 / 19.5px 19px;
}

.checker.blue {
  background: repeating-conic-gradient(#c5d3ff 0 25%, #8894c6 0 50%) 0 0 / 19.5px 19px;
}

.dialog-foot {
  display: flex;
  align-items: center;
  height: 107px;
  padding: 0 32px;
  border-top: 2px solid #ebebeb;
}

.template {
  justify-content: space-between;
  width: 160px;
  margin-right: auto;
  padding: 0 10px 0 12.5px;
}

.cancel,
.ok {
  height: 55px;
  border-radius: 9px;
  font-size: 24.5px;
}

.cancel {
  width: 119px;
  margin-right: 19px;
  border: 2px solid #131313;
}

.ok {
  width: 71px;
  background: #2e2e2e;
  color: #fff;
}
</style>
